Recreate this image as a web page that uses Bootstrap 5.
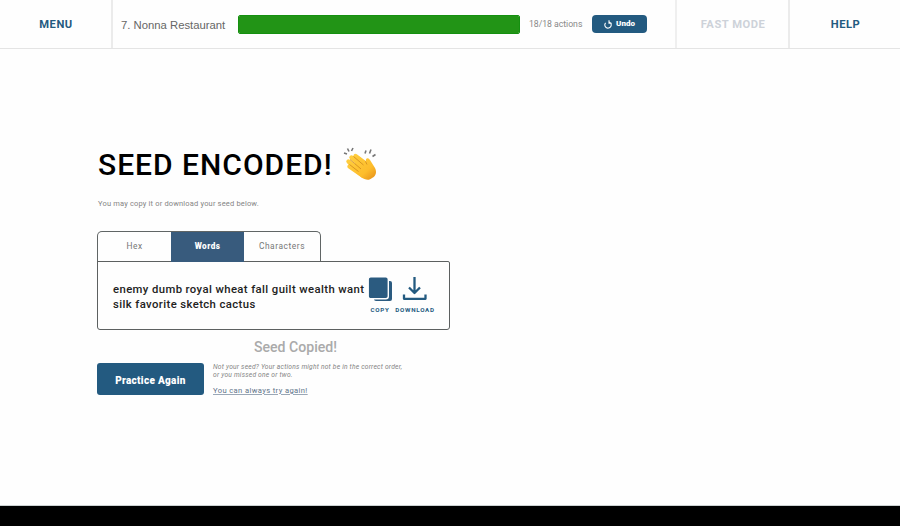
<!DOCTYPE html>
<html lang="en">
<head>
<meta charset="utf-8">
<meta name="viewport" content="width=device-width, initial-scale=1">
<title>Seed Encoded</title>
<link rel="stylesheet" href="https://cdn.jsdelivr.net/npm/bootstrap@5.3.0/dist/css/bootstrap.min.css">
<style>
:root{--blue:#235a80}
body{font-family:Roboto,sans-serif;background:#fefefe;color:#000;overflow:hidden;white-space:nowrap}
.topbar{height:49px;border-bottom:1px solid #e4e4e4}
.menu-cell{width:113px;border-right:2px solid #ebebeb;flex:none}
.fast-cell{width:113px;border-left:2px solid #efefef;flex:none}
.help-cell{width:112px;border-left:2px solid #ebebeb;flex:none}
.nav-label{font-weight:700;font-size:11.2px;letter-spacing:.5px;color:var(--blue);padding:2px 0 0 1px}
.fast-cell.nav-label{color:#cdd2d9}
.level{width:125px;padding:1px 0 0 8px;font:11.3px "Liberation Sans",sans-serif;color:#666}
.meter{width:282px;height:19px;border-radius:2px;--bs-progress-bar-bg:#229416;border:1px solid #159010}
.count{width:72px;padding-left:9px;font-size:8.7px;letter-spacing:-.03px;color:#888;padding-top:2px}
.undo{width:55px;height:18px;border-radius:4px;font-size:8px;font-weight:900;background:var(--blue);color:#fff}
.screen{height:457px;padding:95px 0 0 97px;border-bottom:1px solid #ccd2d2}
.title{height:42px;font-size:30px;font-weight:500;letter-spacing:1px;line-height:42px;padding-left:1px}
.clap{margin-left:9px}
.intro{height:12px;margin-top:11px;font-size:7.5px;line-height:14px;letter-spacing:.17px;color:#858585;padding-left:1px}
.seed-tabs{width:224px;height:31px;margin-top:22px;border:1px solid #606565;border-bottom:0;border-radius:5px 5px 0 0;color:#777;display:grid;grid-template-columns:73px 73px 1fr}
.seed-tabs .nav-link{padding:0;color:inherit;border-radius:0;line-height:28px;font-size:8.4px;letter-spacing:.55px}
.seed-tabs .nav-link.active{background:#385b7d;color:#fff;font-weight:900;font-size:8.2px;letter-spacing:.45px}
.seed-box{width:353px;height:69px;border:1px solid #5c6060;border-radius:0 2px 3px 3px;margin-top:-1px;padding-left:15px;color:#222}
.words{width:257px;padding-top:20px;font-size:11.3px;font-weight:500;line-height:15px;letter-spacing:.4px}
.tool{padding-top:14px;color:var(--blue);font-size:6.2px;font-weight:700;letter-spacing:.75px;line-height:8px;flex:none}
.tool svg{height:26px;width:26px;margin-bottom:4px}
.copy-tool{width:20px}
.download-tool{width:40px;margin-left:5px}
.copied{width:397px;height:20px;margin-top:7px;font-size:14.1px;font-weight:500;line-height:20px;color:#aaa}
.practice{width:107px;height:32px;margin-top:6px;padding:3px 0 0;border:0;border-radius:3px;background:var(--blue);color:#fff;font-size:10px;font-weight:900;line-height:29px;letter-spacing:.3px}
.hint{margin:6px 0 0 9px;font-size:6.7px;font-style:italic;line-height:8px;letter-spacing:.21px;color:#848484}
.retry{font-size:7.6px;font-style:normal;line-height:10px;letter-spacing:.38px;color:#607389;margin-top:7px}
.retry a{color:inherit;text-decoration-color:#9aa7b6}
.footer-band{height:20px;background:#000}
</style>
</head>
<body>
<header class="topbar d-flex align-items-stretch">
  <div class="menu-cell nav-label d-flex align-items-center justify-content-center">MENU</div>
  <div class="d-flex align-items-center flex-grow-1">
    <span class="level">7. Nonna Restaurant</span>
    <div class="progress meter"><div class="progress-bar w-100"></div></div>
    <span class="count">18/18 actions</span>
    <button class="undo btn p-0 d-flex align-items-center justify-content-center">
      <svg class="me-1" width="8" height="9" viewBox="0 0 8 9" fill="none" stroke="currentColor" stroke-width="1.1"><path d="M1.600 2.800A3.200 3.200 0 1 0 5.300 2M5 .3V3.200H7.700"/></svg>Undo
    </button>
  </div>
  <div class="fast-cell nav-label d-flex align-items-center justify-content-center">FAST MODE</div>
  <div class="help-cell nav-label d-flex align-items-center justify-content-center">HELP</div>
</header>
<main class="screen">
  <div class="d-flex align-items-center">
    <h1 class="title mb-0">SEED ENCODED!</h1>
    <svg class="clap" width="36" height="36" viewBox="0 0 36 36">
      <defs><linearGradient id="skin" gradientUnits="userSpaceOnUse" x1="8" y1="8" x2="32" y2="34"><stop stop-color="#ffcf40"/><stop offset=".65" stop-color="#fdbd2c"/><stop offset="1" stop-color="#e58e18"/></linearGradient></defs>
      <g stroke="url(#skin)" stroke-linecap="round" stroke-width="4.4"><path d="m13.500 9 12 9M9.500 10.500l13 11M6.500 14.500l14 12M7.500 19.500l13 9"/></g>
      <path d="m17 9.500 7 5.500c-1-4 2-5 4-2l5 8c2 4 1 8-3 10-3 3-7 2-11-1L9 22l7-10z" fill="url(#skin)"/>
      <path d="m11.500 9.500 10 8.500M8 12.500l11 9.500M7.500 17.500l9 7M23.500 14.500l1.500 3" stroke="#c98018" stroke-width=".7" fill="none"/>
      <path d="m2 6 3 1M5.500 1.500l1.500 3M11 1 9.500 4M24 3.500l-1 3M29 2.500l-1.500 4M33.500 7.500l-3 2" stroke="#777" stroke-width="1.6"/>
    </svg>
  </div>
  <p class="intro mb-0">You may copy it or download your seed below.</p>
  <nav class="seed-tabs text-center overflow-hidden">
    <a class="nav-link">Hex</a><a class="nav-link active">Words</a><a class="nav-link">Characters</a>
  </nav>
  <section class="seed-box d-flex">
    <div class="words">enemy dumb royal wheat fall guilt wealth want<br>silk favorite sketch cactus</div>
    <div class="tool copy-tool d-flex flex-column align-items-center">
      <svg class="flex-shrink-0" viewBox="0 0 26 26"><rect x="7" y="5" width="18" height="20" rx="2" fill="#2b5b80"/><rect x="1.200" y=".7" width="20.100" height="22" rx="2.500" fill="#2b5b80" stroke="#fff" stroke-width="1.400"/></svg>COPY
    </div>
    <div class="tool download-tool d-flex flex-column align-items-center">
      <svg viewBox="0 0 26 26" fill="none" stroke="currentColor" stroke-width="2.300" stroke-linejoin="round"><path d="M12.500 1v16M7 11.500l5.500 5.500 5.500-5.500M2 18.500v4.300h21.500v-4.300"/></svg>DOWNLOAD
    </div>
  </section>
  <div class="copied text-center">Seed Copied!</div>
  <div class="d-flex">
    <button class="practice btn">Practice Again</button>
    <div class="hint">Not your seed? Your actions might not be in the correct order,<br>or you missed one or two.
      <div class="retry"><a href="#">You can always try again!</a></div>
    </div>
  </div>
</main>
<footer class="footer-band"></footer>
<script src="https://cdn.jsdelivr.net/npm/bootstrap@5.3.0/dist/js/bootstrap.bundle.min.js"></script>
</body>
</html>
